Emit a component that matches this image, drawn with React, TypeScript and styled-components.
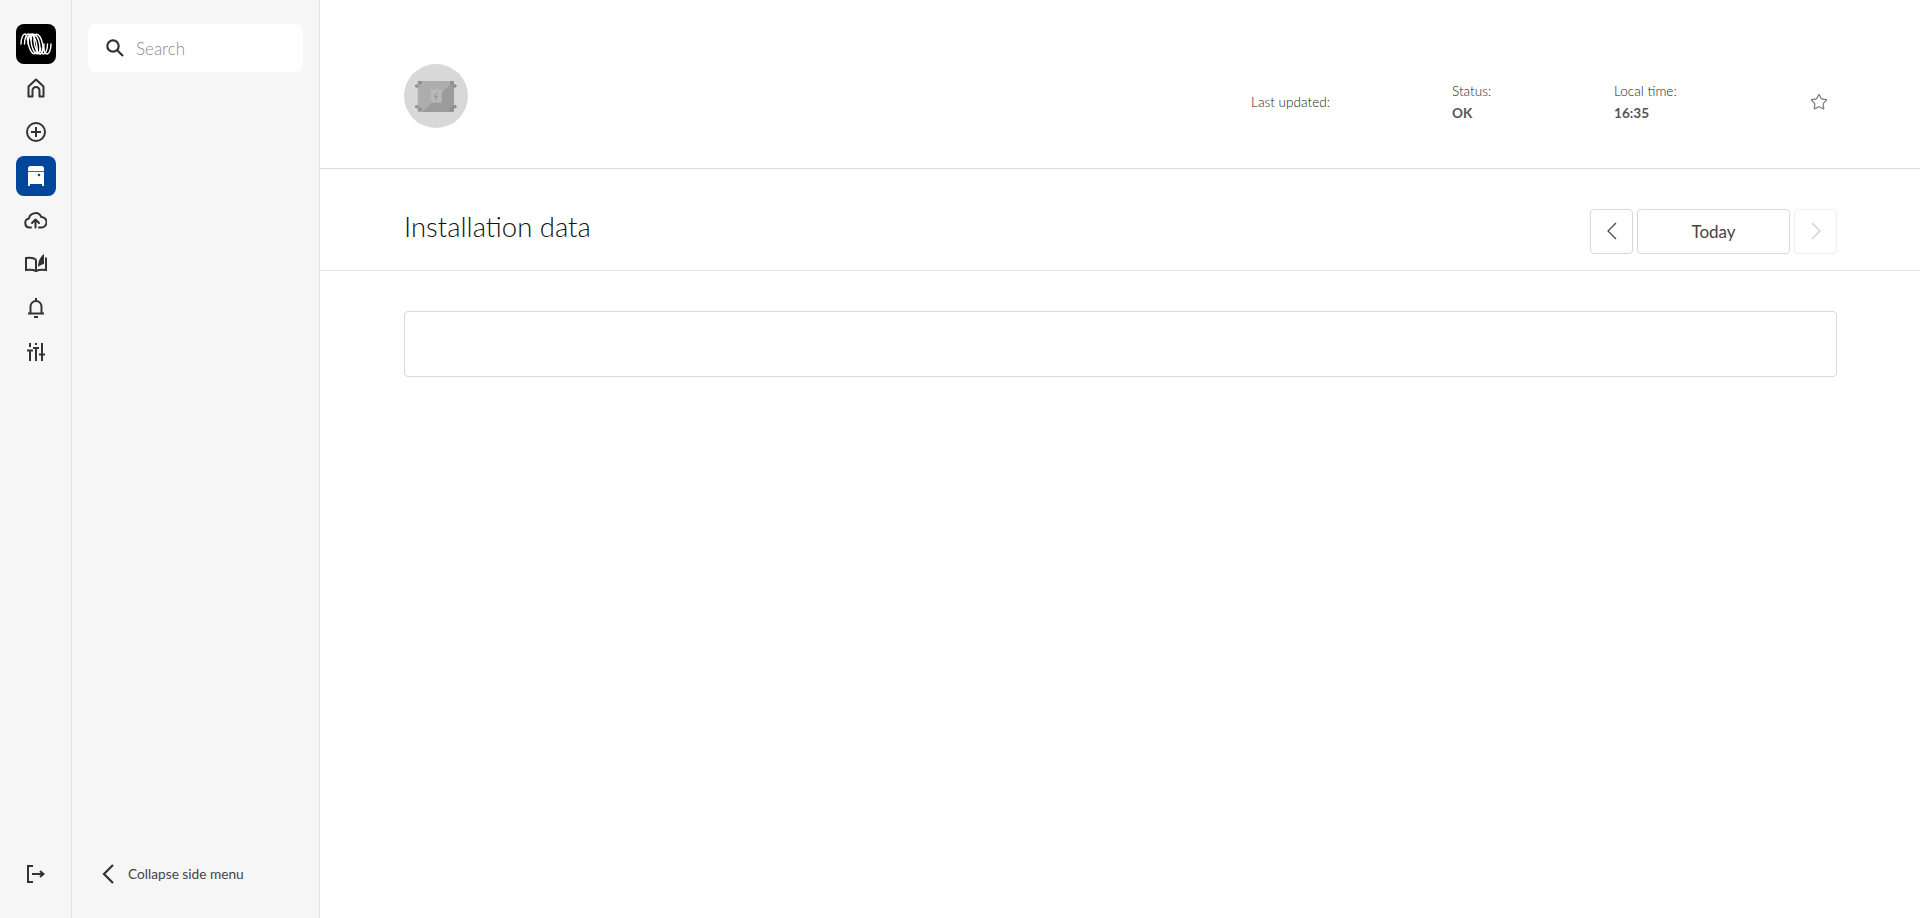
import React from 'react';
import styled, { createGlobalStyle } from 'styled-components';
import { Star } from 'lucide-react';

const GlobalStyle = createGlobalStyle`
  html, body, #root {
    height: 100%;
    margin: 0;
  }

  body {
    background: #fff;
    color: #333;
    font-family: Lato, 'Open Sans', sans-serif;
    overflow: hidden;
  }

  * {
    box-sizing: border-box;
  }
`;

const Page = styled.div`
  display: flex;
  height: 918px;
`;

const IconRail = styled.nav`
  width: 72px;
  flex: none;
  display: flex;
  flex-direction: column;
  align-items: center;
  padding: 24px 0 20px;
  background: #f6f6f6;
  border-right: 1px solid #e3e3e3;
`;

const RailIcon = styled.div<{ $active?: boolean }>`
  width: 40px;
  height: 40px;
  margin-bottom: 4px;
  display: flex;
  align-items: center;
  justify-content: center;
  border-radius: 8px;
  color: ${(p) => (p.$active ? '#fff' : '#333')};
  background: ${(p) => (p.$active ? '#00479b' : 'transparent')};
`;

const LogoTile = styled(RailIcon)`
  background: #000;
`;

const RailSpacer = styled.div`
  flex: 1;
`;

const SideMenu = styled.aside`
  width: 248px;
  flex: none;
  display: flex;
  flex-direction: column;
  padding: 24px 16px 24px;
  background: #f6f6f6;
  border-right: 1px solid #e3e3e3;
`;

const SearchBox = styled.div`
  height: 48px;
  display: flex;
  align-items: center;
  gap: 12px;
  padding: 0 18px;
  background: #fff;
  border-radius: 8px;
  font-size: 17px;
  font-weight: 300;
  color: #8a8a8a;
`;

const CollapseRow = styled.div`
  margin-top: auto;
  height: 40px;
  display: flex;
  align-items: center;
  gap: 14px;
  padding-left: 14px;
  font-size: 13.7px;
  color: #444;
`;

const CollapseLabel = styled.span`
  margin-bottom: 1px;
`;

const Main = styled.main`
  flex: 1;
  min-width: 0;
  display: flex;
  flex-direction: column;
`;

const InstallationHeader = styled.header`
  height: 169px;
  flex: none;
  display: flex;
  padding: 64px 83px 0 84px;
  border-bottom: 1px solid #dcdcd8;
`;

const Avatar = styled.div`
  width: 64px;
  height: 64px;
  flex: none;
  border-radius: 50%;
  background: #d8d8d8;
  display: flex;
  align-items: center;
  justify-content: center;
`;

const Stats = styled.div`
  margin-left: auto;
  display: flex;
  align-items: flex-start;
  height: 64px;
`;

const Stat = styled.div<{ $width: number }>`
  width: ${(p) => p.$width}px;
  display: flex;
  flex-direction: column;
  justify-content: center;
  gap: 6px;
  height: 50px;
  margin-top: 13px;
  font-size: 13.6px;
  font-weight: 300;
  color: #222;
`;

const StatValue = styled.span`
  font-weight: 700;
  color: #555;
`;

const FavouriteIcon = styled.div`
  width: 42px;
  height: 50px;
  margin-top: 13px;
  display: flex;
  align-items: center;
  justify-content: flex-end;
  padding-right: 9px;
  color: #777;
`;

const SectionHeader = styled.div`
  height: 102px;
  flex: none;
  display: flex;
  align-items: center;
  justify-content: space-between;
  padding: 23px 83px 0 84px;
  border-bottom: 1px solid #e3e3e3;
`;

const SectionTitle = styled.h1`
  margin: 0 0 9px;
  font-size: 27.5px;
  font-weight: 300;
  color: #111;
`;

const DateControls = styled.div`
  display: flex;
  gap: 4px;
`;

const DateButton = styled.button<{ $wide?: boolean; $disabled?: boolean }>`
  width: ${(p) => (p.$wide ? '153px' : '43px')};
  height: 45px;
  padding: 0;
  display: flex;
  align-items: center;
  justify-content: center;
  background: #fff;
  border: 1px solid ${(p) => (p.$disabled ? '#eeeeee' : '#d9d9d9')};
  border-radius: 4px;
  font-family: inherit;
  font-size: 17px;
  color: ${(p) => (p.$disabled ? '#cfcfcf' : '#444')};
`;

const Content = styled.div`
  padding: 40px 83px 40px 84px;
`;

const EmptyPanel = styled.div`
  height: 66px;
  border: 1px solid #d9d9d9;
  border-radius: 4px;
`;

function VictronLogo(): JSX.Element {
  const lead = [1, 4.5, 8];
  const trail = [22, 25.5, 29];
  const middle = [12.5, 15.5, 18.5];
  return (
    <svg width="32" height="22" viewBox="0 0 32 22" fill="none" stroke="#fff" strokeWidth="1.4" strokeLinecap="round">
      {lead.map((x) => (
        <path key={x} d={`M${x} 11C${x} 5 ${x + 2} 1 ${x + 4} 1C${x + 6} 1 ${x + 6} 4 ${x + 6.5} 7`} />
      ))}
      {middle.map((x) => (
        <ellipse key={x} cx={x} cy="11" rx="4" ry="10" transform={`rotate(-12 ${x} 11)`} />
      ))}
      {trail.map((x) => (
        <path key={x} d={`M${x - 5} 15C${x - 5} 18 ${x - 4} 21 ${x - 2} 21C${x} 21 ${x + 2} 17 ${x + 2} 11`} />
      ))}
    </svg>
  );
}

function HomeIcon(): JSX.Element {
  return (
    <svg width="18" height="20" viewBox="0 0 18 20" fill="none" stroke="#333" strokeWidth="2" strokeLinejoin="round">
      <path d="M1.500 8.500L9 1.500l7.500 7V18.500H12.500V12.500a3.500 3.500 0 0 0-7 0V18.500H1.500z" />
    </svg>
  );
}

function AddIcon(): JSX.Element {
  return (
    <svg width="20" height="20" viewBox="0 0 20 20" fill="none" stroke="#333" strokeWidth="2">
      <circle cx="10" cy="10" r="9" />
      <path d="M10 5v10M5 10h10" />
    </svg>
  );
}

function InverterIcon(): JSX.Element {
  return (
    <svg width="16" height="20" viewBox="0 0 16 20" fill="#fff">
      <path d="M0 2.500A2.500 2.500 0 0 1 2.500 0h11A2.500 2.500 0 0 1 16 2.500V5H0z" />
      <path d="M0 5.800h16V18H0z" />
      <circle cx="11" cy="9" r="1.300" fill="#00479b" />
      <path d="M0 18h2v2H0zM14 18h2v2h-2z" />
    </svg>
  );
}

function CloudIcon(): JSX.Element {
  return (
    <svg width="23" height="17" viewBox="0 0 23 17" fill="none" stroke="#333" strokeWidth="2" strokeLinecap="round" strokeLinejoin="round">
      <path d="M7 15.500H5.500a4.500 4.500 0 0 1-.6-8.900 6.500 6.500 0 0 1 12.400-1.500 5.200 5.200 0 0 1 .2 10.400H15" />
      <path d="M11.500 15.500V7.500M8 11l3.500-3.500L15 11" />
    </svg>
  );
}

function ManualIcon(): JSX.Element {
  return (
    <svg width="22" height="21" viewBox="0 0 22 21" fill="none" stroke="#333" strokeWidth="2">
      <path d="M11 5.500C9 4 5 3.400 1 4v12c4-.5 8 0 10 1 2-1 6-1.500 10-1V3.500" />
      <path d="M11 5.500V17" />
      <path d="M13 13c0-5 2-10.500 6-13v10c-2.500 .5-4.500 1.500-6 3z" fill="#333" stroke="none" />
    </svg>
  );
}

function BellIcon(): JSX.Element {
  return (
    <svg width="16" height="20" viewBox="0 0 16 20" fill="none" stroke="#333" strokeWidth="2">
      <path d="M8 0v3M2.500 15.500V8.500a5.500 5.500 0 0 1 11 0v7M0 15.500h16" />
      <path d="M6 19h4" />
    </svg>
  );
}

function SlidersIcon(): JSX.Element {
  return (
    <svg width="18" height="18" viewBox="0 0 18 18" fill="none" stroke="#333" strokeWidth="2">
      <path d="M3 0v4M0 7.500h6M3 7.500V18" />
      <path d="M9 0v2M6 5h6M9 5v13" />
      <path d="M15 0v10.500M12 11.500h6M15 11.500V18" />
    </svg>
  );
}

function ExitIcon(): JSX.Element {
  return (
    <svg width="18" height="18" viewBox="0 0 18 18" fill="none" stroke="#333" strokeWidth="2">
      <path d="M6 1H1v16h5" />
      <path d="M5 9h11" />
      <path d="M13 6l3.500 3-3.500 3" />
    </svg>
  );
}

function SearchIcon(): JSX.Element {
  return (
    <svg width="18" height="18" viewBox="0 0 18 18" fill="none" stroke="#333" strokeWidth="2.200">
      <circle cx="7" cy="7" r="5.700" />
      <path d="M11 11l6 6" />
    </svg>
  );
}

function CollapseIcon(): JSX.Element {
  return (
    <svg width="12" height="20" viewBox="0 0 12 20" fill="none" stroke="#333" strokeWidth="2.200">
      <path d="M11 1L2 10l9 9" />
    </svg>
  );
}

function PagerChevron({ flip }: { flip?: boolean }): JSX.Element {
  return (
    <svg width="10" height="18" viewBox="0 0 10 18" fill="none" stroke="currentColor" strokeWidth="1.200">
      <path d={flip ? 'M1 1l8 8-8 8' : 'M9 1L1 9l8 8'} />
    </svg>
  );
}

function DeviceIcon(): JSX.Element {
  const screws = [[2.7, 7], [6, 3.7], [37.7, 3.7], [41, 7], [2.7, 27.7], [6, 30.3], [37.7, 30.3], [41, 27.7]];
  return (
    <svg width="44" height="34" viewBox="0 0 44 34">
      <rect x="3.700" y="2" width="36.300" height="31" fill="#adadad" />
      <path d="M40 2V33H8z" fill="#9b9b9b" />
      <rect x="16.700" y="10.300" width="11" height="13.400" fill="#b8b8b8" />
      <path d="M23.500 13.500l-3 4h3l-2.500 3.500" fill="none" stroke="#808080" strokeWidth="0.700" />
      {screws.map(([cx, cy]) => (
        <circle key={`${cx}-${cy}`} cx={cx} cy={cy} r="1.200" fill="#bbb" stroke="#666" strokeWidth="0.800" />
      ))}
    </svg>
  );
}

export default function App(): JSX.Element {
  return (
    <Page>
      <GlobalStyle />
      <IconRail>
        <LogoTile>
          <VictronLogo />
        </LogoTile>
        <RailIcon><HomeIcon /></RailIcon>
        <RailIcon><AddIcon /></RailIcon>
        <RailIcon $active><InverterIcon /></RailIcon>
        <RailIcon><CloudIcon /></RailIcon>
        <RailIcon><ManualIcon /></RailIcon>
        <RailIcon><BellIcon /></RailIcon>
        <RailIcon><SlidersIcon /></RailIcon>
        <RailSpacer />
        <RailIcon><ExitIcon /></RailIcon>
      </IconRail>
      <SideMenu>
        <SearchBox>
          <SearchIcon />
          <span>Search</span>
        </SearchBox>
        <CollapseRow>
          <CollapseIcon />
          <CollapseLabel>Collapse side menu</CollapseLabel>
        </CollapseRow>
      </SideMenu>
      <Main>
        <InstallationHeader>
          <Avatar><DeviceIcon /></Avatar>
          <Stats>
            <Stat $width={201}>Last updated:</Stat>
            <Stat $width={162}>Status:<StatValue>OK</StatValue></Stat>
            <Stat $width={181}>Local time:<StatValue>16:35</StatValue></Stat>
            <FavouriteIcon><Star size={18} strokeWidth={1.6} /></FavouriteIcon>
          </Stats>
        </InstallationHeader>
        <SectionHeader>
          <SectionTitle>Installation data</SectionTitle>
          <DateControls>
            <DateButton><PagerChevron /></DateButton>
            <DateButton $wide>Today</DateButton>
            <DateButton $disabled><PagerChevron flip /></DateButton>
          </DateControls>
        </SectionHeader>
        <Content>
          <EmptyPanel />
        </Content>
      </Main>
    </Page>
  );
}
